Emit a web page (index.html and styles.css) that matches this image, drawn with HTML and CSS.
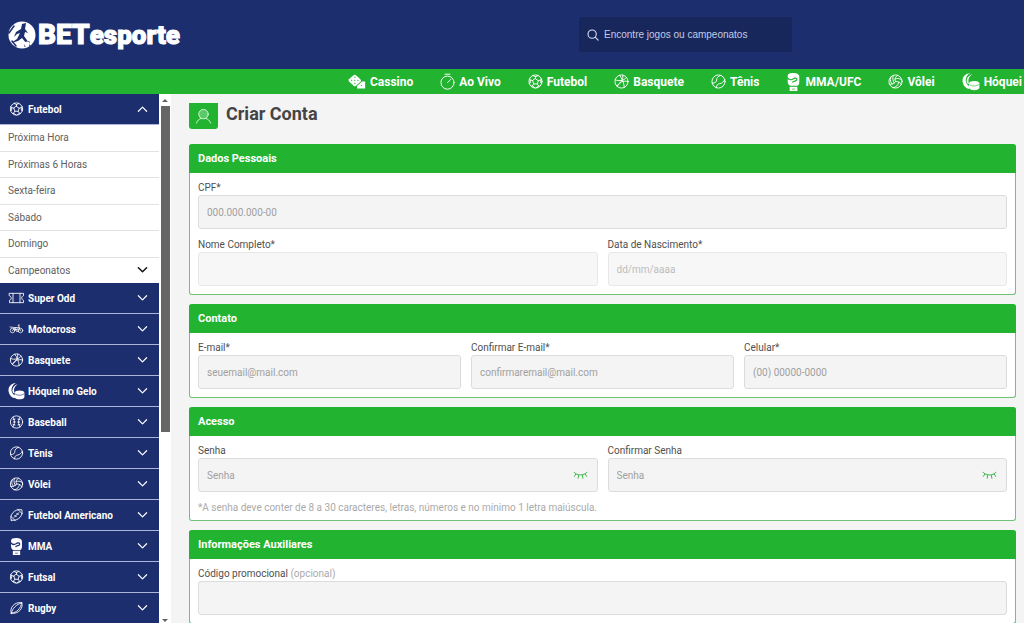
FILE: index.html
```html
<!DOCTYPE html>
<html lang="pt-BR">
<head>
<meta charset="utf-8">
<meta name="viewport" content="width=device-width, initial-scale=1">
<title>BETesporte - Criar Conta</title>
<link rel="stylesheet" href="styles.css">
</head>
<body>
<svg class="sprite" aria-hidden="true">
  <symbol id="soccer" viewBox="0 0 24 24"><circle cx="12" cy="12" r="10.500"/><path d="M12 7.500l4.500 3.200-1.700 5.200H9.200l-1.700-5.200zM12 7.500V4.200M16.500 10.700l4-1.400M14.800 15.900l2.500 3.400M9.200 15.900l-2.500 3.400M7.500 10.700l-4-1.400M8 2.500l4 2 4-2M22 8l-1.800 1.500.3 5 1.500.5M18.500 19.500l-2 0-3.500 2.500M5.500 19.500l2 0 3.500 2.500M2 8l1.800 1.500-.3 5-1.500.5"/></symbol>
  <symbol id="basket" viewBox="0 0 24 24"><circle cx="12" cy="12" r="10.500"/><path d="M2 9.500c7 2.500 14 1 18-4M9 2c4 5 7 12 7.500 19.500M22.500 12c-8-2-15 1-17.500 8M14 1.800c1 4-1 11-9 17.500"/></symbol>
  <symbol id="tennis" viewBox="0 0 24 24"><circle cx="12" cy="12" r="10.500"/><path d="M2 14.500c5 .5 7-2 7-5s2-6 6.500-7.300M8.500 22c0-4 2-6 5.500-6.500s6-3 8-6.500"/></symbol>
  <symbol id="volley" viewBox="0 0 24 24"><circle cx="12" cy="12" r="10.500"/><path d="M12 12C10 8 12 4 15.500 2M12 12c4.500-.5 8 1.500 9.500 5M12 12c-2.500 4-6.500 5-10 4M8.500 2.500C6.500 7 8 11 10 14.500M22.500 10c-4-3.500-8-3.500-11.500-2M8 22c5-.5 8-4 9-8.500M4.500 5C2.500 11 5 15 7 16"/></symbol>
  <symbol id="hockey" viewBox="0 0 28 28"><path class="solid" d="M13 0C4 1 0 7 1 14c1 6 5 10 10 11l1-4C7 18 5 14 6 9c1-4 3-7 7-9z"/><path class="solid" d="M16 2C9 4 6 10 8 16l3 1C9 11 10 6 16 2z"/><path class="solid" d="M11 16c0-5 16-5 16 0v7c0 5-16 5-16 0z"/><path class="cut thin" d="M12 18c2 3 12 3 14 0"/></symbol>
  <symbol id="baseball" viewBox="0 0 24 24"><circle cx="12" cy="12" r="10.500"/><path d="M6 3.500c3.500 5 3.500 12 0 17M18 3.500c-3.500 5-3.500 12 0 17M6 8l3.500-1M6.500 12H10M6 16l3.500 1M18 8l-3.500-1M17.500 12H14M18 16l-3.500 1"/></symbol>
  <symbol id="glove" viewBox="0 0 20 28"><path class="solid" d="M1 5C1 1 4 0 10 0c6 0 9 2 9 6v8c0 3-1 5-3 6H5c-3-1-4-4-4-7z"/><path class="solid" d="M4 21.500h12V28H4z"/><path class="cut" d="M1 8c2 3 6 3 9 1 2-2 6-1 5 2-1 2-4 1-6 3"/><path class="cut thin" d="M8 25h4"/></symbol>
  <symbol id="football" viewBox="0 0 24 24"><path d="M3 21C-.5 12 8 1 21 3c3 9-5 20-18 18zM8 16l8-8M9 12.500l2.500 2.500M12.500 9l2.500 2.500M2 14l8 8M14 2l8 8"/></symbol>
  <symbol id="rugby" viewBox="0 0 24 24"><path d="M3 21C-.5 12 8 1 21 3c3 9-5 20-18 18zM3 21C5 13 11 6 21 3M3 21C13 20 19 13 21 3"/></symbol>
  <symbol id="ticket" viewBox="0 0 28 24"><path d="M2 4h24v4c-4 1-4 7 0 8v4H2v-4c4-1 4-7 0-8zM8 4v16M20 4v16"/></symbol>
  <symbol id="moto" viewBox="0 0 28 20"><circle cx="6" cy="13" r="4.500"/><circle cx="22" cy="13" r="4.500"/><path d="M6 13l5-6h8l3 6M1 6l9 1M11 7l3 8h4l2-8-3-5h3M8 10l9 2M11 12l6-3"/></symbol>
  <symbol id="dice" viewBox="0 0 28 24"><path class="solid" d="M10.500 1Q12 1 20 9q1 1.500 0 3l-8 7q-1.500 1-3 0L1 11.500q-1-1.500 0-3L9 1.500z"/><path class="solid" d="M22 12h5v11H14v-4z"/><path class="dots" d="M10.500 5v.1M5.500 10v.1M10.500 10v.1M15.500 10v.1M10.500 15v.1M21 18v.1"/></symbol>
  <symbol id="watch" viewBox="0 0 24 28"><circle cx="12" cy="15" r="10.500"/><path d="M8 1.500h8M12 15l5-5"/></symbol>
  <symbol id="down" viewBox="0 0 12 8"><path d="M1.500 1.500L6 6l4.500-4.500"/></symbol>
  <symbol id="eye" viewBox="0 0 16 10"><path d="M1 2c3 4 11 4 14 0M3 4L1.500 6.500M6 5.200L5.500 8.500M10 5.200l.5 3.300M13 4l1.500 2.500"/></symbol>
</svg>

<header class="topbar">
  <a class="logo" href="#" aria-label="BETesporte">
    <svg class="logo-ball" viewBox="0 0 28 28" aria-hidden="true"><circle cx="14" cy="14" r="13.500" fill="#fff"/><path d="M14 3l4-1-1 6 3 4-3-1-1 4 5 7 2 4-4-3-5-6-4 3-7 2 6-4 3-6-3 1-3 3 2-5 5-3z" fill="#1c2e6e"/><path d="M1 12l5-7M17 25l1-3 3-1M4 20l4 5" stroke="#1c2e6e" stroke-width="1.500" fill="none"/><circle cx="19" cy="23" r="2.500" fill="#fff"/></svg>
    <span class="logo-text"><span class="logo-bet">BET</span>esporte</span>
  </a>
  <label class="search">
    <svg class="search-icon" viewBox="0 0 14 14" aria-hidden="true"><circle cx="6" cy="6" r="4.800"/><path d="M9.500 9.500L13 13"/></svg>
    <input type="search" placeholder="Encontre jogos ou campeonatos" aria-label="Encontre jogos ou campeonatos">
  </label>
</header>

<nav class="sports" aria-label="Esportes">
  <a href="#"><svg class="icon wide"><use href="#dice"/></svg>Cassino</a>
  <a href="#"><svg class="icon tall"><use href="#watch"/></svg>Ao Vivo</a>
  <a href="#"><svg class="icon"><use href="#soccer"/></svg>Futebol</a>
  <a href="#"><svg class="icon"><use href="#basket"/></svg>Basquete</a>
  <a href="#"><svg class="icon"><use href="#tennis"/></svg>Tênis</a>
  <a href="#"><svg class="icon tall"><use href="#glove"/></svg>MMA/UFC</a>
  <a href="#"><svg class="icon"><use href="#volley"/></svg>Vôlei</a>
  <a href="#"><svg class="icon wide tall"><use href="#hockey"/></svg>Hóquei</a>
</nav>

<div class="page">
  <aside class="sidebar">
    <div class="menu">
      <button type="button" class="group" aria-expanded="true"><svg class="icon"><use href="#soccer"/></svg>Futebol<svg class="chevron open"><use href="#down"/></svg></button>
      <div class="submenu">
        <a href="#">Próxima Hora</a>
        <a href="#">Próximas 6 Horas</a>
        <a href="#">Sexta-feira</a>
        <a href="#">Sábado</a>
        <a href="#">Domingo</a>
        <a href="#">Campeonatos<svg class="chevron"><use href="#down"/></svg></a>
      </div>
      <button type="button" class="group"><svg class="icon"><use href="#ticket"/></svg>Super Odd<svg class="chevron"><use href="#down"/></svg></button>
      <button type="button" class="group"><svg class="icon small"><use href="#moto"/></svg>Motocross<svg class="chevron"><use href="#down"/></svg></button>
      <button type="button" class="group"><svg class="icon"><use href="#basket"/></svg>Basquete<svg class="chevron"><use href="#down"/></svg></button>
      <button type="button" class="group"><svg class="icon tall"><use href="#hockey"/></svg>Hóquei no Gelo<svg class="chevron"><use href="#down"/></svg></button>
      <button type="button" class="group"><svg class="icon"><use href="#baseball"/></svg>Baseball<svg class="chevron"><use href="#down"/></svg></button>
      <button type="button" class="group"><svg class="icon"><use href="#tennis"/></svg>Tênis<svg class="chevron"><use href="#down"/></svg></button>
      <button type="button" class="group"><svg class="icon"><use href="#volley"/></svg>Vôlei<svg class="chevron"><use href="#down"/></svg></button>
      <button type="button" class="group"><svg class="icon"><use href="#football"/></svg>Futebol Americano<svg class="chevron"><use href="#down"/></svg></button>
      <button type="button" class="group"><svg class="icon tall"><use href="#glove"/></svg>MMA<svg class="chevron"><use href="#down"/></svg></button>
      <button type="button" class="group"><svg class="icon"><use href="#soccer"/></svg>Futsal<svg class="chevron"><use href="#down"/></svg></button>
      <button type="button" class="group"><svg class="icon"><use href="#rugby"/></svg>Rugby<svg class="chevron"><use href="#down"/></svg></button>
    </div>
    <div class="scrollbar" aria-hidden="true">
      <span class="arrow up"></span>
      <div class="track"><div class="thumb"></div></div>
      <span class="arrow"></span>
    </div>
  </aside>

  <main class="content">
    <div class="heading">
      <span class="heading-icon"><svg viewBox="0 0 18 18" aria-hidden="true"><circle cx="9" cy="6.500" r="5"/><path d="M1.500 16c1-3 3-4.500 5-5M16.500 16c-1-3-3-4.500-5-5"/></svg></span>
      <h1>Criar Conta</h1>
    </div>
    <form class="form">
      <section class="card">
        <h2>Dados Pessoais</h2>
        <div class="fields">
          <div class="row"><div class="field"><label for="cpf">CPF*</label><input id="cpf" type="text" placeholder="000.000.000-00"></div></div>
          <div class="row">
            <div class="field"><label for="nome">Nome Completo*</label><input id="nome" type="text" disabled></div>
            <div class="field"><label for="nasc">Data de Nascimento*</label><input id="nasc" type="text" placeholder="dd/mm/aaaa" disabled></div>
          </div>
        </div>
      </section>
      <section class="card">
        <h2>Contato</h2>
        <div class="fields">
          <div class="row">
            <div class="field"><label for="email">E-mail*</label><input id="email" type="email" placeholder="seuemail@mail.com"></div>
            <div class="field"><label for="email2">Confirmar E-mail*</label><input id="email2" type="email" placeholder="confirmaremail@mail.com"></div>
            <div class="field"><label for="cel">Celular*</label><input id="cel" type="tel" placeholder="(00) 00000-0000"></div>
          </div>
        </div>
      </section>
      <section class="card">
        <h2>Acesso</h2>
        <div class="fields">
          <div class="row">
            <div class="field"><label for="senha">Senha</label><div class="secret"><input id="senha" type="password" placeholder="Senha"><button type="button" aria-label="Mostrar senha"><svg><use href="#eye"/></svg></button></div></div>
            <div class="field"><label for="senha2">Confirmar Senha</label><div class="secret"><input id="senha2" type="password" placeholder="Senha"><button type="button" aria-label="Mostrar senha"><svg><use href="#eye"/></svg></button></div></div>
          </div>
          <p class="hint">*A senha deve conter de 8 a 30 caracteres, letras, números e no mínimo 1 letra maiúscula.</p>
        </div>
      </section>
      <section class="card">
        <h2>Informações Auxiliares</h2>
        <div class="fields">
          <div class="row"><div class="field"><label for="promo">Código promocional <span class="optional">(opcional)</span></label><input id="promo" type="text"></div></div>
        </div>
      </section>
    </form>
  </main>
</div>
</body>
</html>
```
FILE: styles.css
```css
* { box-sizing: border-box; }
body {
  --navy: #1c2e6e;
  --green: #22b331;
  --cut: var(--navy);
  margin: 0;
  height: 100vh;
  display: flex;
  flex-direction: column;
  overflow: hidden;
  background: #f4f4f4;
  color: #505050;
  font-family: Roboto, "Liberation Sans", sans-serif;
  font-size: 10px;
}
a { color: inherit; text-decoration: none; }
button, input { font: inherit; }
svg { flex: none; fill: none; stroke: currentColor; stroke-linecap: round; stroke-linejoin: round; }
.sprite { position: absolute; width: 0; height: 0; }
.solid { fill: currentColor; stroke: none; }
.cut { stroke: var(--cut); stroke-width: 2; }
.cut.thin { stroke-width: 1; }
.dots { stroke: var(--green); stroke-width: 2; }

.topbar {
  flex: none;
  display: flex;
  align-items: center;
  height: 69px;
  padding-left: 8px;
  background: var(--navy);
}
.logo { display: flex; align-items: center; gap: 2px; width: 571px; color: #fff; }
.logo-ball { width: 28px; height: 28px; stroke: none; }
.logo-text { font-size: 26px; line-height: 36px; font-weight: 900; -webkit-text-stroke: 1px #fff; }
.logo-bet { font-size: 28px; }
.search {
  display: flex;
  align-items: center;
  gap: 5px;
  width: 213px;
  height: 35px;
  padding: 0 8px;
  background: #18275b;
  border-radius: 2px;
  color: #d5dcf2;
}
.search-icon { width: 12px; height: 12px; stroke-width: 1.3; }
.search input {
  flex: 1;
  min-width: 0;
  padding: 0;
  border: 0;
  outline: 0;
  background: none;
  color: inherit;
  font-family: "Liberation Sans", Arial, sans-serif;
}
.search input::placeholder { color: #c3cbe6; }

.sports {
  --cut: var(--green);
  flex: none;
  display: flex;
  align-items: center;
  gap: 27px;
  height: 25px;
  padding-left: 348px;
  overflow: hidden;
  white-space: nowrap;
  background: var(--green);
  color: #fff;
  font-size: 12px;
  font-weight: 700;
}
.sports a { display: flex; align-items: center; gap: 4px; }
.icon { width: 15px; height: 15px; stroke-width: 1.5; }
.icon.tall { height: 18px; }
.icon.wide { width: 18px; }

.page { flex: 1; min-height: 0; display: flex; }
.sidebar { flex: none; display: flex; width: 171px; background: #fff; }
.menu { flex: 1; overflow: hidden; }
.group {
  display: flex;
  align-items: center;
  gap: 3px;
  width: 100%;
  height: 31px;
  padding: 0 11px 0 8px;
  border: 0;
  border-bottom: 1px solid #a9b6da;
  background: var(--navy);
  color: #fff;
  font-weight: 700;
  text-align: left;
}
.group .icon { width: 17px; height: 14px; }
.group .icon.tall { height: 17px; }
.group .icon.small { height: 10px; }
.chevron { width: 11px; height: 8px; margin-left: auto; stroke-width: 1.3; }
.chevron.open { transform: rotate(180deg); }
.submenu { display: grid; min-height: 158px; }
.submenu a {
  display: flex;
  align-items: center;
  padding: 0 11px 0 8px;
  border-bottom: 1px solid #e2e2e2;
  color: #606060;
}
.submenu a:last-child { border-bottom: 0; }
.submenu .chevron { color: #111; stroke-width: 1.6; }
.scrollbar { display: flex; flex-direction: column; align-items: center; width: 12px; padding: 5px 0 1px; gap: 4px; }
.arrow { border: 3px solid transparent; border-top: 3px solid #606060; border-bottom: 0; }
.arrow.up { border-top: 0; border-bottom: 3px solid #606060; }
.track { flex: 1; width: 9px; }
.thumb { height: 64%; background: #666; }

.content { flex: 1; min-width: 0; padding: 9px 8px 9px 18px; }
.heading { display: flex; align-items: flex-start; gap: 8px; height: 26px; margin-bottom: 15px; color: #444; }
.heading-icon {
  display: flex;
  align-items: center;
  justify-content: center;
  width: 29px;
  height: 26px;
  border-radius: 0 0 3px 3px;
  background: var(--green);
  color: #d9f5dc;
}
.heading-icon svg { width: 17px; height: 17px; }
.heading-icon circle { fill: #5cc968; }
h1, h2, p { margin: 0; }
h1 { font-size: 18px; line-height: 22px; font-weight: 700; }
.form { display: grid; gap: 9px; }
.card { border: 1px solid #6cc474; border-top: 0; border-radius: 3px; background: #fff; }
.card h2 {
  margin: 0 -1px;
  padding: 1px 9px 0;
  border-radius: 3px 3px 0 0;
  background: var(--green);
  color: #fff;
  font-size: 11px;
  line-height: 28px;
  font-weight: 700;
}
.fields { display: grid; gap: 8px; padding: 7px 8px 8px; }
.row { display: grid; grid-auto-flow: column; grid-auto-columns: 1fr; gap: 10px; }
.field label { display: block; line-height: 15px; }
.field input {
  display: block;
  width: 100%;
  height: 34px;
  padding: 0 8px;
  border: 1px solid #dcdcdc;
  border-radius: 3px;
  background: #f4f4f4;
  color: #555;
}
.field input::placeholder { color: #a0a0a0; }
.field input:disabled { background: #f7f7f7; border-color: #e8e8e8; }
.field input:disabled::placeholder { color: #bcbcbc; }
.secret { position: relative; }
.secret button {
  position: absolute;
  top: 8px;
  right: 10px;
  display: flex;
  align-items: center;
  height: 18px;
  padding: 0;
  border: 0;
  background: none;
  color: #35b344;
}
.secret svg { width: 15px; height: 10px; }
.hint { margin-bottom: -3px; color: #aaa; line-height: 15px; }
.optional { color: #aaa; }
```
